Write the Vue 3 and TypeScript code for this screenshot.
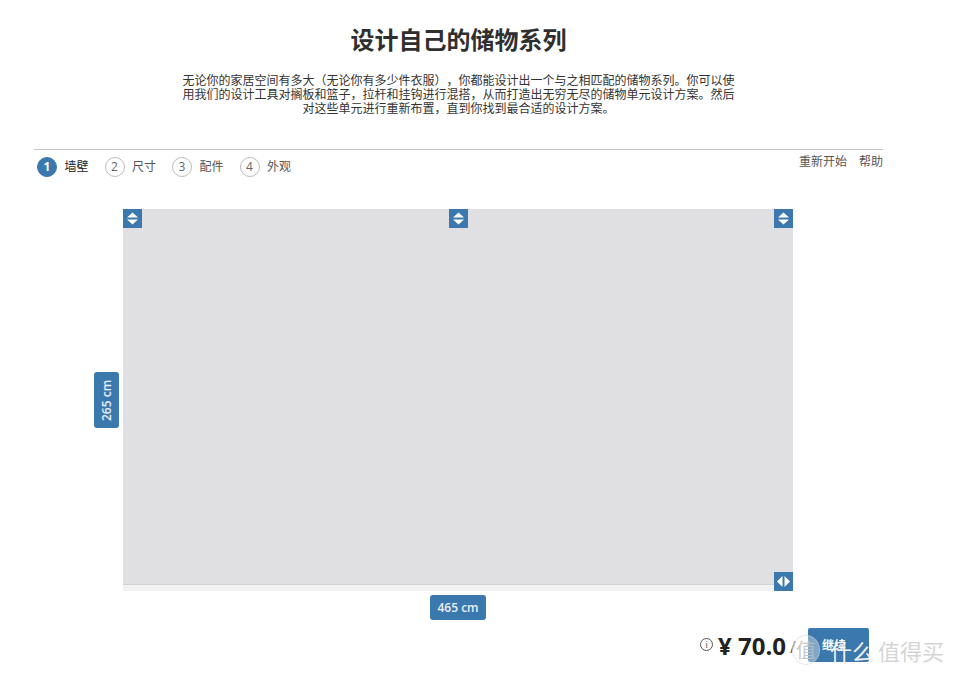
<script setup lang="ts">
const steps = [
  { no: 1, label: '墙壁' },
  { no: 2, label: '尺寸' },
  { no: 3, label: '配件' },
  { no: 4, label: '外观' },
]
</script>

<template>
  <div class="page">
    <header class="intro">
      <h1>设计自己的储物系列</h1>
      <p>无论你的家居空间有多大（无论你有多少件衣服），你都能设计出一个与之相匹配的储物系列。你可以使用我们的设计工具对搁板和篮子，拉杆和挂钩进行混搭，从而打造出无穷无尽的储物单元设计方案。然后对这些单元进行重新布置，直到你找到最合适的设计方案。</p>
    </header>

    <nav class="stepbar">
      <ol class="steps">
        <li v-for="(s, i) in steps" :key="s.no" class="step" :class="{ active: i === 0 }">
          <span class="num">{{ s.no }}</span>
          <span>{{ s.label }}</span>
        </li>
      </ol>
      <div class="links">
        <a>重新开始</a>
        <a>帮助</a>
      </div>
    </nav>

    <section class="stage">
      <div class="wall">
        <span class="handle tl">
          <svg viewBox="0 0 19 19" width="19" height="19"><path d="M9.5 3.5 15 8.5H4zM4 10.5h11L9.5 15.5z" fill="#fff" /></svg>
        </span>
        <span class="handle tc">
          <svg viewBox="0 0 19 19" width="19" height="19"><path d="M9.5 3.5 15 8.5H4zM4 10.5h11L9.5 15.5z" fill="#fff" /></svg>
        </span>
        <span class="handle tr">
          <svg viewBox="0 0 19 19" width="19" height="19"><path d="M9.5 3.5 15 8.5H4zM4 10.5h11L9.5 15.5z" fill="#fff" /></svg>
        </span>
        <span class="handle br">
          <svg viewBox="0 0 19 19" width="19" height="19"><path d="M8.5 4v11L3 9.5zM10.5 4 16 9.5 10.5 15z" fill="#fff" /></svg>
        </span>
        <span class="dim height">265 cm</span>
        <span class="dim width">465 cm</span>
      </div>
    </section>

    <footer class="bottom">
      <span class="info">i</span>
      <strong class="price">¥ 70.0</strong>
      <span class="unit">/</span>
      <button class="next">继续</button>
    </footer>

    <div class="mark">
      <span class="mark-badge">值</span>
      <span class="mark-a">什么</span><span class="mark-b">值得买</span>
    </div>
  </div>
</template>

<style scoped>
.page {
  position: relative;
  width: 849px;
  height: 677px;
  margin-left: 34px;
  overflow: visible;
  color: #333;
  font-family: "Open Sans", "Noto Sans CJK SC", sans-serif;
  text-spacing-trim: space-all;
}

.intro {
  padding-top: 24px;
  text-align: center;
}

.intro h1 {
  margin: 0;
  height: 32px;
  font-size: 24px;
  line-height: 32px;
  font-weight: 700;
  color: #2f2f2f;
}

.intro p {
  width: 556px;
  margin: 18px auto 0;
  font-size: 12px;
  line-height: 14px;
  color: #333;
}

.stepbar {
  display: flex;
  justify-content: space-between;
  margin-top: 33px;
  border-top: 1px solid #c8c8c8;
}

.steps {
  display: flex;
  gap: 16px;
  margin: 0;
  padding: 7px 0 0 3px;
  list-style: none;
}

.step {
  display: flex;
  align-items: center;
  gap: 7.5px;
  font-size: 12px;
  line-height: 20px;
  color: #555;
}

.step.active {
  color: #222;
}

.num {
  display: flex;
  align-items: center;
  justify-content: center;
  box-sizing: border-box;
  width: 20px;
  height: 20px;
  border: 1px solid #bbb;
  border-radius: 50%;
  font-size: 12px;
  color: #666;
}

.step.active .num {
  border-color: #3b78ad;
  background: #3b78ad;
  color: #fff;
  font-weight: 700;
}

.links {
  display: flex;
  gap: 12px;
  font-size: 12px;
  line-height: 24px;
  color: #555;
}

.stage {
  margin-top: 32px;
  padding-left: 89px;
}

.wall {
  position: relative;
  width: 670px;
  height: 376px;
  background: #e0e0e2;
  border-bottom: 6px solid #f2f2f2;
  box-shadow: inset 0 -1px 0 #d2d2d2;
}

.handle {
  position: absolute;
  display: block;
  width: 19px;
  height: 19px;
  background: #3b78ad;
}

.handle svg {
  display: block;
}

.tl { left: 0; top: 0; }
.tc { left: 326px; top: 0; }
.tr { right: 0; top: 0; }
.br { right: 0; bottom: -6px; }

.dim {
  position: absolute;
  display: flex;
  align-items: center;
  justify-content: center;
  box-sizing: border-box;
  border-radius: 3px;
  background: #3b78ad;
  color: #e8f0f7;
  font-size: 12px;
  font-weight: 600;
}

.height {
  left: -29px;
  top: 163px;
  width: 25px;
  height: 56px;
  writing-mode: vertical-rl;
  transform: rotate(180deg);
}

.width {
  left: 307px;
  top: 386px;
  width: 56px;
  height: 25px;
}

.bottom {
  display: flex;
  align-items: flex-start;
  justify-content: flex-end;
  margin-top: 37px;
  padding-right: 14px;
}

.info {
  display: flex;
  align-items: center;
  justify-content: center;
  box-sizing: border-box;
  width: 13px;
  height: 13px;
  margin-top: 10px;
  border: 1px solid #555;
  border-radius: 50%;
  font-size: 9px;
  line-height: 1;
  color: #444;
}

.price {
  margin-left: 5px;
  font-size: 24px;
  line-height: 36px;
  font-weight: 700;
  color: #222;
}

.unit {
  width: 18px;
  margin-left: 4px;
  font-size: 16px;
  line-height: 38px;
  color: #555;
}

.next {
  width: 61px;
  height: 34px;
  padding: 0 9px 0 0;
  border: 0;
  border-radius: 2px;
  background: #3b78ad;
  color: #fff;
  font-family: inherit;
  font-size: 12px;
  font-weight: 700;
}

.mark {
  position: absolute;
  left: 758px;
  top: 632px;
  display: flex;
  align-items: center;
  font-size: 22px;
  line-height: 36px;
  white-space: nowrap;
  font-family: "Noto Sans CJK SC", sans-serif;
}

.mark-badge {
  display: flex;
  align-items: center;
  justify-content: center;
  box-sizing: border-box;
  width: 28px;
  height: 30px;
  margin-right: 10px;
  border: 1px solid rgba(205, 205, 205, 0.5);
  border-radius: 50%;
  background: rgba(255, 255, 255, 0.35);
  color: rgba(190, 190, 190, 0.85);
  font-size: 20px;
}

.mark-a {
  color: rgba(255, 255, 255, 0.92);
  text-shadow: 0 0 1px rgba(130, 130, 130, 0.5);
}

.mark-b {
  margin-left: 4px;
  color: rgba(205, 205, 205, 0.85);
}
</style>

<style>
body {
  background: #fff;
}
</style>
